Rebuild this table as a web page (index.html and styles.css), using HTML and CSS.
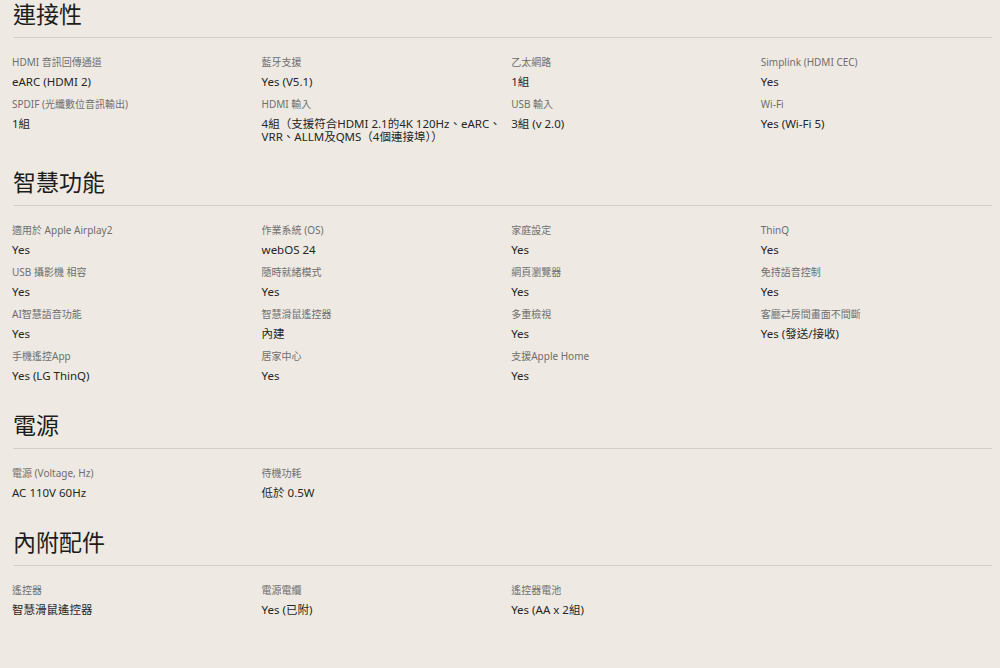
FILE: index.html
```html
<!DOCTYPE html>
<html lang="zh-Hant">
<head>
<meta charset="utf-8">
<title>規格</title>
<link rel="stylesheet" href="styles.css">
</head>
<body>
<main class="specs">
  <section class="spec-section">
    <h2 class="spec-title">連接性</h2>
    <div class="spec-rule"></div>
    <div class="spec-grid">
      <div class="spec-item"><div class="spec-label">HDMI 音訊回傳通道</div><div class="spec-value">eARC (HDMI 2)</div></div>
      <div class="spec-item"><div class="spec-label">藍牙支援</div><div class="spec-value">Yes (V5.1)</div></div>
      <div class="spec-item"><div class="spec-label">乙太網路</div><div class="spec-value">1組</div></div>
      <div class="spec-item"><div class="spec-label">Simplink (HDMI CEC)</div><div class="spec-value">Yes</div></div>
      <div class="spec-item"><div class="spec-label">SPDIF (光纖數位音訊輸出)</div><div class="spec-value">1組</div></div>
      <div class="spec-item"><div class="spec-label">HDMI 輸入</div><div class="spec-value">4組（支援符合HDMI 2.1的4K 120Hz、eARC、VRR、ALLM及QMS（4個連接埠））</div></div>
      <div class="spec-item"><div class="spec-label">USB 輸入</div><div class="spec-value">3組 (v 2.0)</div></div>
      <div class="spec-item"><div class="spec-label">Wi-Fi</div><div class="spec-value">Yes (Wi-Fi 5)</div></div>
    </div>
  </section>

  <section class="spec-section">
    <h2 class="spec-title">智慧功能</h2>
    <div class="spec-rule"></div>
    <div class="spec-grid">
      <div class="spec-item"><div class="spec-label">適用於 Apple Airplay2</div><div class="spec-value">Yes</div></div>
      <div class="spec-item"><div class="spec-label">作業系統 (OS)</div><div class="spec-value">webOS 24</div></div>
      <div class="spec-item"><div class="spec-label">家庭設定</div><div class="spec-value">Yes</div></div>
      <div class="spec-item"><div class="spec-label">ThinQ</div><div class="spec-value">Yes</div></div>
      <div class="spec-item"><div class="spec-label">USB 攝影機 相容</div><div class="spec-value">Yes</div></div>
      <div class="spec-item"><div class="spec-label">隨時就緒模式</div><div class="spec-value">Yes</div></div>
      <div class="spec-item"><div class="spec-label">網頁瀏覽器</div><div class="spec-value">Yes</div></div>
      <div class="spec-item"><div class="spec-label">免持語音控制</div><div class="spec-value">Yes</div></div>
      <div class="spec-item"><div class="spec-label">AI智慧語音功能</div><div class="spec-value">Yes</div></div>
      <div class="spec-item"><div class="spec-label">智慧滑鼠遙控器</div><div class="spec-value">內建</div></div>
      <div class="spec-item"><div class="spec-label">多重檢視</div><div class="spec-value">Yes</div></div>
      <div class="spec-item"><div class="spec-label">客廳⇄房間畫面不間斷</div><div class="spec-value">Yes (發送/接收)</div></div>
      <div class="spec-item"><div class="spec-label">手機遙控App</div><div class="spec-value">Yes (LG ThinQ)</div></div>
      <div class="spec-item"><div class="spec-label">居家中心</div><div class="spec-value">Yes</div></div>
      <div class="spec-item"><div class="spec-label">支援Apple Home</div><div class="spec-value">Yes</div></div>
    </div>
  </section>

  <section class="spec-section">
    <h2 class="spec-title">電源</h2>
    <div class="spec-rule"></div>
    <div class="spec-grid">
      <div class="spec-item"><div class="spec-label">電源 (Voltage, Hz)</div><div class="spec-value">AC 110V 60Hz</div></div>
      <div class="spec-item"><div class="spec-label">待機功耗</div><div class="spec-value">低於 0.5W</div></div>
    </div>
  </section>

  <section class="spec-section">
    <h2 class="spec-title">內附配件</h2>
    <div class="spec-rule"></div>
    <div class="spec-grid">
      <div class="spec-item"><div class="spec-label">遙控器</div><div class="spec-value">智慧滑鼠遙控器</div></div>
      <div class="spec-item"><div class="spec-label">電源電纜</div><div class="spec-value">Yes (已附)</div></div>
      <div class="spec-item"><div class="spec-label">遙控器電池</div><div class="spec-value">Yes (AA x 2組)</div></div>
    </div>
  </section>
</main>
</body>
</html>
```

FILE: styles.css
```css
html, body {
  margin: 0;
  padding: 0;
  background: #eeeae3;
}

body {
  font-family: "Noto Sans", "Noto Sans CJK TC", sans-serif;
  color: #222;
  overflow: hidden;
}

.specs {
  display: flex;
  flex-direction: column;
}

.spec-section {
  display: flex;
  flex-direction: column;
  margin-bottom: 19px;
}

.spec-title {
  margin: 0 0 0 13px;
  font-size: 23px;
  line-height: 28px;
  font-weight: 400;
  color: #1d1d1d;
}

.spec-rule {
  margin: 9px 8px 0 13px;
  height: 1px;
  background: #d3cfc8;
}

.spec-grid {
  display: grid;
  grid-template-columns: repeat(3, 249.6px) 1fr;
  padding: 18px 0 0 12px;
}

.spec-item {
  box-sizing: border-box;
  display: flex;
  flex-direction: column;
  min-height: 42px;
  padding: 0 6px 6px 0;
}

.spec-label {
  font-size: 10px;
  line-height: 13px;
  color: #6e6e6e;
}

.spec-value {
  margin-top: 6px;
  font-size: 11.5px;
  line-height: 13px;
  color: #262626;
}
```
